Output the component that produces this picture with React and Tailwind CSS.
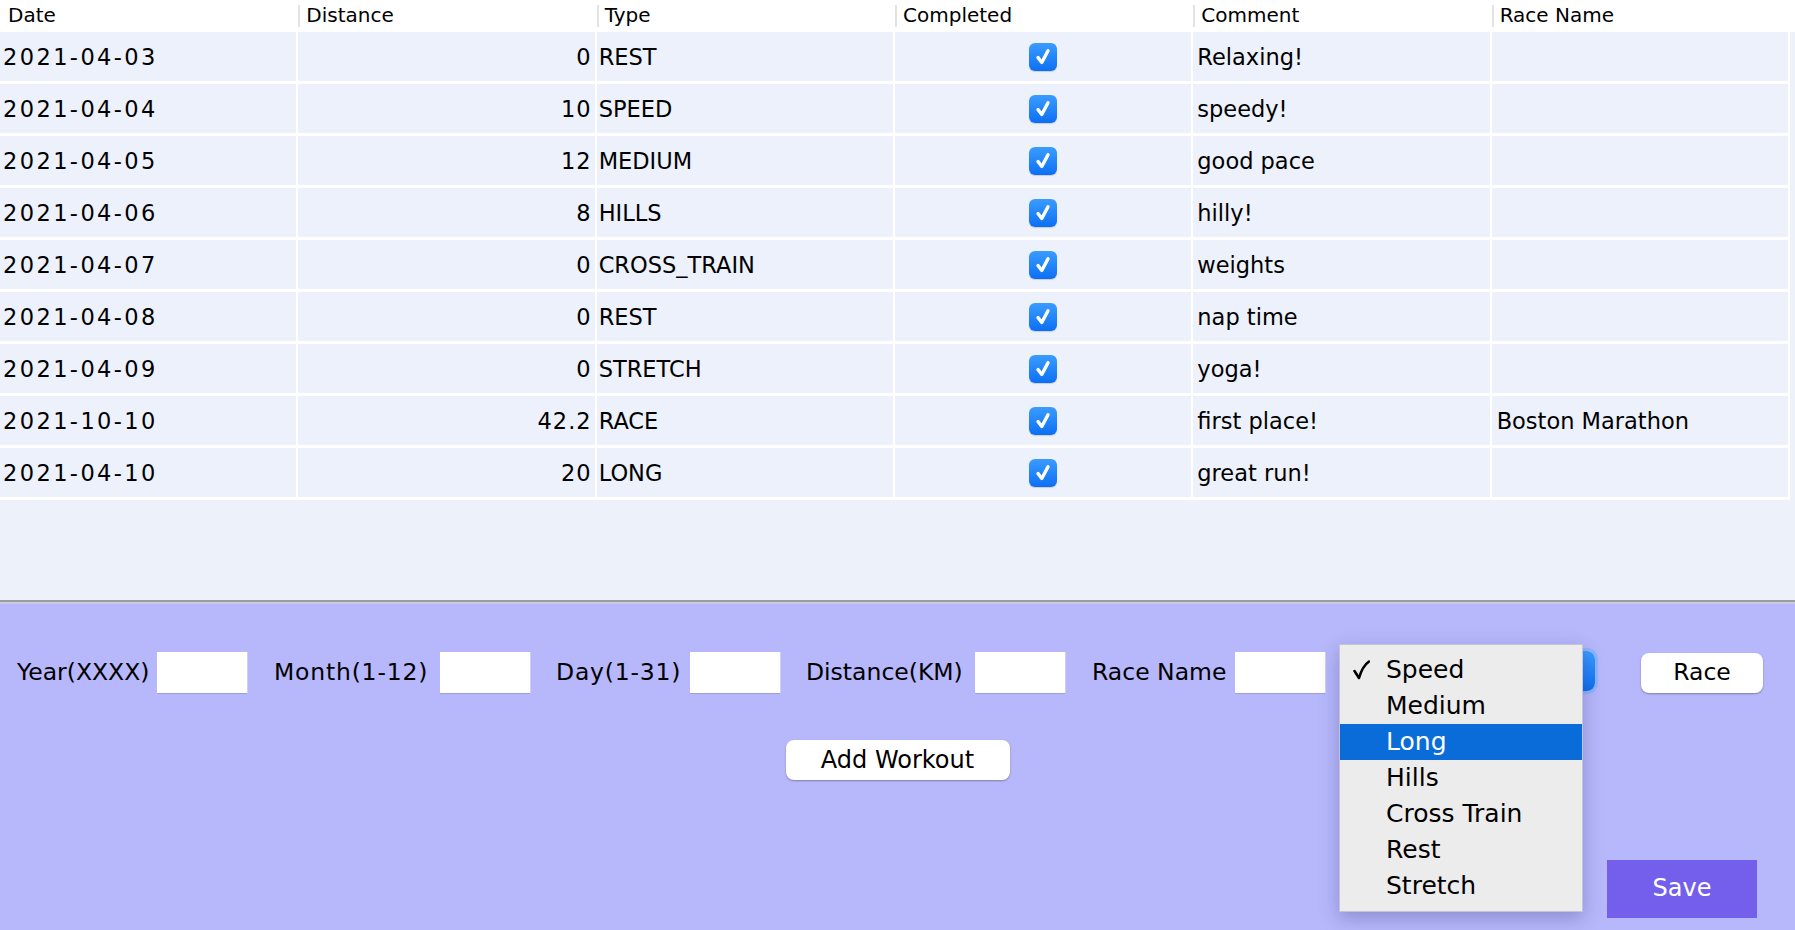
import React from "react";

const rows = [
  ["2021-04-03", "0", "REST", "Relaxing!", ""],
  ["2021-04-04", "10", "SPEED", "speedy!", ""],
  ["2021-04-05", "12", "MEDIUM", "good pace", ""],
  ["2021-04-06", "8", "HILLS", "hilly!", ""],
  ["2021-04-07", "0", "CROSS_TRAIN", "weights", ""],
  ["2021-04-08", "0", "REST", "nap time", ""],
  ["2021-04-09", "0", "STRETCH", "yoga!", ""],
  ["2021-10-10", "42.2", "RACE", "first place!", "Boston Marathon"],
  ["2021-04-10", "20", "LONG", "great run!", ""],
];

const headers = ["Date", "Distance", "Type", "Completed", "Comment", "Race Name"];

function Check() {
  return (
    <div className="w-[28px] h-[28px] rounded-[6px] bg-gradient-to-b from-[#3a9cff] to-[#0a6ff2] flex items-center justify-center shadow-[0_1px_1px_rgba(0,0,0,0.15)]">
      <svg width="20" height="20" viewBox="0 0 20 20">
        <path d="M5 10.5 L8.8 15.5 L15 3.8" fill="none" stroke="white" strokeWidth="3.4" strokeLinecap="round" strokeLinejoin="round" />
      </svg>
    </div>
  );
}

function Field() {
  return <div className="w-[90px] h-[41px] bg-white shadow-[0_1px_0_#9d9ddc,1px_0_0_#cfcff5]" />;
}

const menuItems = ["Speed", "Medium", "Long", "Hills", "Cross Train", "Rest", "Stretch"];

const cell = "h-[52px] border-b-[3px] border-r-2 border-white bg-[#ecf1fb] flex items-center pt-[3px] text-[22.5px]";

export default function App() {
  return (
    <div className="w-[1795px] h-[930px] flex flex-col overflow-hidden font-['DejaVu_Sans',sans-serif] text-black">
      <div className="h-[600px] bg-[#edf1fa] flex flex-col">
        <div className="h-[32px] bg-white w-full">
          <div className="grid grid-cols-6 w-[1790px] h-full">
            {headers.map((h, i) => (
              <div key={h} className="flex items-center h-full">
                {i > 0 && <div className="w-[2px] h-[22px] bg-[#e2e2e2]" />}
                <span className={`text-[20px] leading-none pb-[3px] ${i === 0 ? "pl-[8px]" : "pl-[6px]"}`}>{h}</span>
              </div>
            ))}
          </div>
        </div>
        <div className="grid grid-cols-6 w-[1790px]">
          {rows.map((r, idx) => (
            <React.Fragment key={idx}>
              <div className={`${cell} pl-[3px] tracking-[2.4px]`}>{r[0]}</div>
              <div className={`${cell} justify-end pr-[3px] tracking-[1px]`}>{r[1]}</div>
              <div className={`${cell} pl-[2px]`}>{r[2]}</div>
              <div className={`${cell} justify-center !pt-0`}><Check /></div>
              <div className={`${cell} pl-[4px]`}>{r[3]}</div>
              <div className={`${cell} pl-[5px]`}>{r[4]}</div>
            </React.Fragment>
          ))}
        </div>
      </div>
      <div className="h-[4px] border-t-[2px] border-[#9b9b9b] bg-[#c9c9e8]" />
      <div className="relative flex-1 bg-[#b7b7fb] flex flex-col pt-[48px]">
        <div className="flex items-center h-[41px] pl-[17px] text-[23.5px]">
          <span className="w-[140px]">Year(XXXX)</span>
          <Field />
          <span className="ml-[27px] w-[166px] tracking-[0.8px]">Month(1-12)</span>
          <Field />
          <span className="ml-[26px] w-[134px] tracking-[0.8px]">Day(1-31)</span>
          <Field />
          <span className="ml-[26px] w-[169px]">Distance(KM)</span>
          <Field />
          <span className="ml-[27px] w-[143px]">Race Name</span>
          <Field />
          <div className="ml-[20px] w-[250px] h-[40px] -mt-[4px] rounded-[8px] bg-white ring-[3px] ring-[#8fb4f8] flex justify-end">
            <div className="w-[28px] h-full rounded-r-[8px] bg-gradient-to-b from-[#3a9cff] to-[#0a6ff2]" />
          </div>
          <button className="ml-[46px] w-[122px] h-[40px] rounded-[8px] bg-white shadow-[0_1px_2px_rgba(0,0,0,0.3)] text-[23.5px] flex items-center justify-center">Race</button>
        </div>
        <button className="mt-[47px] mx-auto w-[224px] h-[40px] rounded-[8px] bg-white shadow-[0_1px_2px_rgba(0,0,0,0.3)] text-[24px] flex items-center justify-center">Add Workout</button>
        <button className="mt-[80px] self-end mr-[38px] w-[150px] h-[58px] bg-[#745fed] text-white text-[24px] flex items-center justify-center pb-[3px]">Save</button>

        <div className="absolute left-[1339px] top-[40px] w-[244px] h-[268px] bg-[#ececec] border border-[#c4c4d4] shadow-[0_6px_18px_rgba(40,40,120,0.3)] py-[7px]">
          {menuItems.map((m, i) => (
            <div key={m} className={`h-[36px] flex items-center text-[25px] ${i === 2 ? "bg-[#0a6cd9] text-white" : ""}`}>
              <span className="w-[46px] pl-[13px] flex items-center">
                {i === 0 && (
                  <svg width="17" height="20" viewBox="0 0 17 20">
                    <path d="M1.5 11 L6 18 C8 11 11 5 16 1.5" fill="none" stroke="black" strokeWidth="2.6" strokeLinecap="round" strokeLinejoin="round" />
                  </svg>
                )}
              </span>
              <span>{m}</span>
            </div>
          ))}
        </div>
      </div>
    </div>
  );
}
